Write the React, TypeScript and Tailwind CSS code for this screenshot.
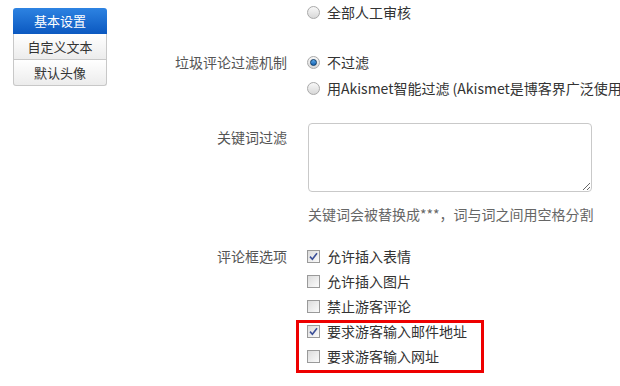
import React from 'react'

const font = { fontFamily: '"Microsoft YaHei", "Noto Sans CJK SC", "Noto Sans", sans-serif' }

function Radio({ checked }: { checked?: boolean }) {
  return (
    <span className="flex h-[13px] w-[13px] shrink-0 items-center justify-center rounded-full border border-[#a9a9a9] bg-gradient-to-b from-[#f8f8f8] to-[#d8d8d8]">
      {checked && (
        <span className="h-[7px] w-[7px] rounded-full border border-[#0b3a66] bg-gradient-to-b from-[#5aa7e8] to-[#1164b4]" />
      )}
    </span>
  )
}

function Checkbox({ checked }: { checked?: boolean }) {
  return (
    <span className="flex h-[13px] w-[13px] shrink-0 items-center justify-center border border-[#9a9a9a] bg-gradient-to-br from-[#dcdcdc] to-[#fbfbfb]">
      {checked && (
        <svg width="9" height="9" viewBox="0 0 9 9">
          <path d="M1 4.6 L3.4 7.2 L8 1.2" fill="none" stroke="#3b4f98" strokeWidth="1.6" />
        </svg>
      )}
    </span>
  )
}

function Row({ label, children, h = 'h-[25px]' }: { label?: string; children: React.ReactNode; h?: string }) {
  return (
    <div className={`flex items-center ${h}`}>
      <div className="w-[182px] shrink-0 pr-[2px] text-right text-[14px] text-[#555]">{label}</div>
      <div className="ml-[18px] flex items-center gap-[7px] whitespace-nowrap text-[14px] text-[#333]">{children}</div>
    </div>
  )
}

function Sidebar() {
  return (
    <div className="ml-[13px] mt-[8px] w-[94px] shrink-0 self-start text-[13px]">
      <div className="flex h-[26px] items-center justify-center rounded-t-[3px] bg-gradient-to-b from-[#2d83e2] to-[#0a58c0] text-white">
        基本设置
      </div>
      <div className="flex h-[26px] items-center justify-center border-x border-b border-[#c8c8c8] bg-gradient-to-b from-[#ffffff] to-[#ececec] text-[#333]">
        自定义文本
      </div>
      <div className="flex h-[26px] items-center justify-center rounded-b-[3px] border-x border-b border-[#c8c8c8] bg-gradient-to-b from-[#ffffff] to-[#ececec] text-[#333]">
        默认头像
      </div>
    </div>
  )
}

export default function App() {
  return (
    <div className="flex h-[386px] w-[620px] overflow-hidden bg-white" style={font}>
      <Sidebar />
      <div className="min-w-0 flex-1">
        <Row h="h-[25px]">
          <Radio />
          <span>全部人工审核</span>
        </Row>

        <div className="mt-[24px]">
          <Row label="垃圾评论过滤机制" h="h-[26px]">
            <Radio checked />
            <span>不过滤</span>
          </Row>
          <Row h="h-[26px]">
            <Radio />
            <span>用Akismet智能过滤 (Akismet是博客界广泛使用的反垃圾评论服务)</span>
          </Row>
        </div>

        <div className="mt-[22px] flex items-start">
          <div className="w-[182px] shrink-0 pr-[2px] pt-[4px] text-right text-[14px] leading-[20px] text-[#555]">关键词过滤</div>
          <div className="ml-[19px]">
            <textarea className="block h-[69px] w-[284px] rounded-[4px] border border-[#c9c9c9] bg-white outline-none" />
            <div className="mt-[10px] flex h-[24px] items-center whitespace-nowrap text-[14px] text-[#666]">
              关键词会被替换成***，词与词之间用空格分割
            </div>
          </div>
        </div>

        <div className="relative mt-[18px]">
          <Row label="评论框选项">
            <Checkbox checked />
            <span>允许插入表情</span>
          </Row>
          <Row>
            <Checkbox />
            <span>允许插入图片</span>
          </Row>
          <Row>
            <Checkbox />
            <span>禁止游客评论</span>
          </Row>
          <Row>
            <Checkbox checked />
            <span>要求游客输入邮件地址</span>
          </Row>
          <Row>
            <Checkbox />
            <span>要求游客输入网址</span>
          </Row>
          <div className="absolute left-[189px] top-[76px] h-[53px] w-[188px] border-[3px] border-[#ee0000]" />
        </div>
      </div>
    </div>
  )
}
